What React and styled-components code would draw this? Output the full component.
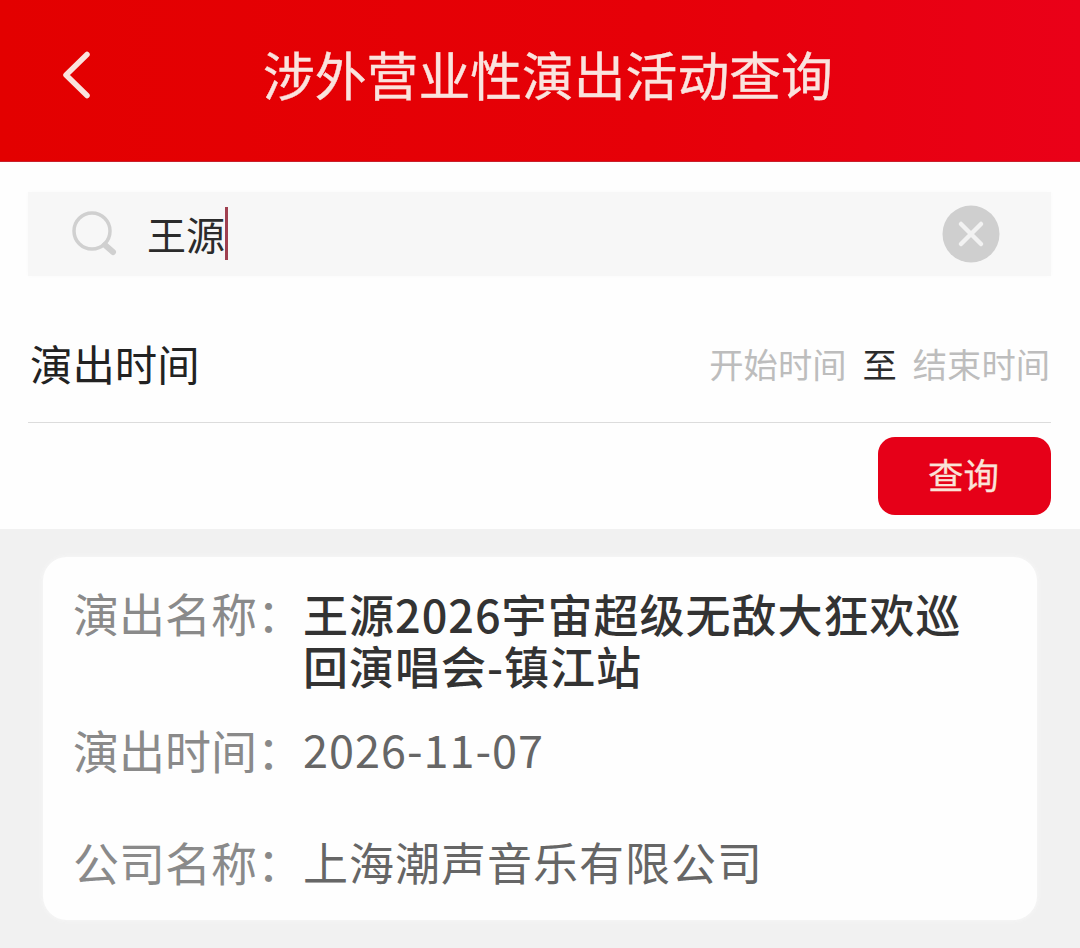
import React from "react";
import styled, { createGlobalStyle } from "styled-components";

const Global = createGlobalStyle`
  html, body { margin: 0; padding: 0; background: #f1f1f1; }
  * { box-sizing: border-box; }
  body { font-family: "Noto Sans CJK SC", "Noto Sans", sans-serif; }
`;
const Page = styled.div`width: 1080px; height: 948px; overflow: hidden; background: #f1f1f1;`;
const Header = styled.header`
  height: 162px; background: linear-gradient(90deg, #e30000 0%, #e60008 60%, #ea0018 100%);
  display: flex; align-items: center; padding: 0 0 14px 60px;
  border-bottom: 1px solid #c8202c;
`;
const Back = styled.svg`width: 36px; height: 54px; flex: none;`;
const Title = styled.h1`
  margin: 0 0 0 167px; font-size: 51.8px; line-height: 60px; font-weight: 400; color: #fae3de; white-space: nowrap;
  -webkit-text-stroke: 0.4px #fae3de;
`;
const Form = styled.section`
  height: 367px; background: #fefefe; padding: 30px 29px 0 28px;
`;
const SearchBar = styled.div`
  height: 84px; background: #f7f7f7; display: flex; align-items: center; padding: 0 51px 0 43px;
  box-shadow: 0 0 5px #fbfbfb;
`;
const SearchIcon = styled.svg`width: 48px; height: 48px; flex: none;`;
const SearchText = styled.span`
  margin-left: 28px; padding-bottom: 3px; font-size: 39px; line-height: 52px; color: #2b2b2b; white-space: nowrap;
`;
const Caret = styled.span`width: 3px; height: 53px; margin-bottom: 1px; background: #a04050; flex: none;`;
const Spacer = styled.div`flex: 1;`;
const ClearBtn = styled.svg`width: 58px; height: 58px; flex: none;`;
const TimeRow = styled.div`
  height: 147px; padding: 28px 1px 0 2px; border-bottom: 1px solid #dcdcdc; display: flex; align-items: center; justify-content: space-between;
`;
const TimeLabel = styled.span`font-size: 42.4px; line-height: 56px; color: #222; white-space: nowrap;`;
const Range = styled.div`display: flex; align-items: center; gap: 16px; font-size: 34.3px; line-height: 44px;`;
const RangeHint = styled.span`color: #bdbdbd; white-space: nowrap;`;
const RangeTo = styled.span`color: #2b2b2b;`;
const Actions = styled.div`display: flex; justify-content: flex-end; padding-top: 14px;`;
const QueryBtn = styled.button`
  width: 173px; height: 78px; border: 0; border-radius: 17px; background: #e60018; color: #fae3d8;
  font: 400 35.5px/44px "Noto Sans CJK SC", sans-serif; padding: 0 2px 4px 0;
  -webkit-text-stroke: 0.3px #fae3d8;
`;
const Results = styled.section`padding: 28px 43px 0;`;
const Card = styled.article`
  width: 994px; height: 363px; background: #fefefe; border-radius: 24px; padding: 29px 72px 0 30px;
  box-shadow: 0 0 5px #f8f8f8;
`;
const Row = styled.div`
  display: flex; height: ${(p) => p.$h}px;
`;
const Label = styled.span`
  flex: none; width: 230px; font-size: 46px; line-height: 52px; color: #8a8a8a; white-space: nowrap;
`;
const Value = styled.span`
  flex: 1; font-size: 45px; line-height: 52px; letter-spacing: 1px;
  padding-top: ${(p) => p.$drop || 0}px;
  color: ${(p) => (p.$strong ? "#333" : "#666")};
  font-weight: ${(p) => (p.$strong ? 500 : 400)};
`;

export default function App() {
  return (
    <Page>
      <Global />
      <Header>
        <Back viewBox="0 0 36 54" fill="none">
          <path d="M27 7.5 L6 28 L27 48.5" stroke="#fae3de" strokeWidth="5.5" strokeLinecap="round" strokeLinejoin="round" />
        </Back>
        <Title>涉外营业性演出活动查询</Title>
      </Header>
      <Form>
        <SearchBar>
          <SearchIcon viewBox="0 0 48 48" fill="none">
            <circle cx="21" cy="21" r="18" stroke="#d0d0d0" strokeWidth="3.5" />
            <path d="M34 35 L42 42" stroke="#d0d0d0" strokeWidth="6" strokeLinecap="round" />
          </SearchIcon>
          <SearchText>王源</SearchText>
          <Caret />
          <Spacer />
          <ClearBtn viewBox="0 0 58 58" fill="none">
            <circle cx="29" cy="29" r="28.5" fill="#cfcfcf" />
            <path d="M19 19 L39 39 M39 19 L19 39" stroke="#f2f2f2" strokeWidth="4.5" strokeLinecap="round" />
          </ClearBtn>
        </SearchBar>
        <TimeRow>
          <TimeLabel>演出时间</TimeLabel>
          <Range>
            <RangeHint>开始时间</RangeHint>
            <RangeTo>至</RangeTo>
            <RangeHint>结束时间</RangeHint>
          </Range>
        </TimeRow>
        <Actions>
          <QueryBtn>查询</QueryBtn>
        </Actions>
      </Form>
      <Results>
        <Card>
          <Row $h={137}>
            <Label>演出名称：</Label>
            <Value $strong $drop={2}>王源2026宇宙超级无敌大狂欢巡回演唱会-镇江站</Value>
          </Row>
          <Row $h={112}>
            <Label>演出时间：</Label>
            <Value>2026-11-07</Value>
          </Row>
          <Row $h={60}>
            <Label>公司名称：</Label>
            <Value $drop={1}>上海潮声音乐有限公司</Value>
          </Row>
        </Card>
      </Results>
    </Page>
  );
}
